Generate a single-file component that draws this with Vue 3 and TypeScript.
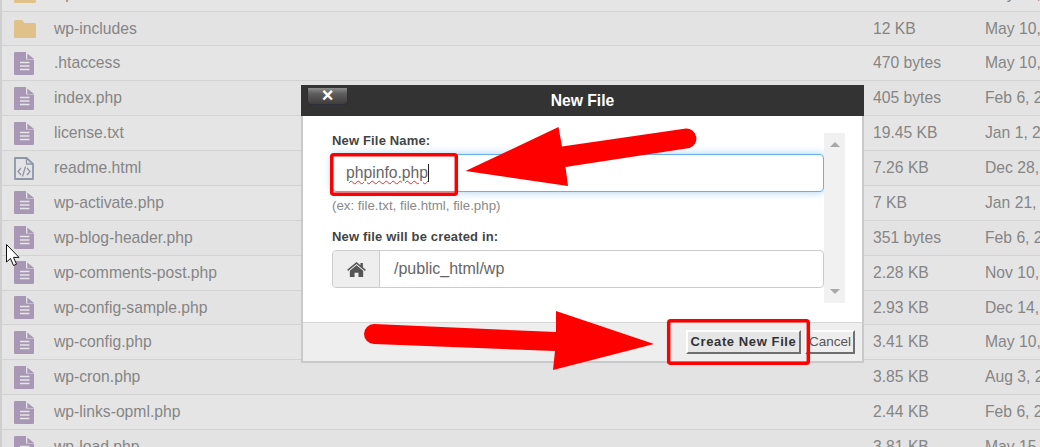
<script setup lang="ts">
interface FileRow {
  name: string
  size: string
  date: string
  kind: 'folder' | 'text' | 'code'
}

const rows: FileRow[] = [
  { name: 'wp-content', size: '4 KB', date: 'May 15, 2019', kind: 'folder' },
  { name: 'wp-includes', size: '12 KB', date: 'May 10, 2019', kind: 'folder' },
  { name: '.htaccess', size: '470 bytes', date: 'May 10, 2019', kind: 'text' },
  { name: 'index.php', size: '405 bytes', date: 'Feb 6, 2019', kind: 'text' },
  { name: 'license.txt', size: '19.45 KB', date: 'Jan 1, 2019', kind: 'text' },
  { name: 'readme.html', size: '7.26 KB', date: 'Dec 28, 2018', kind: 'code' },
  { name: 'wp-activate.php', size: '7 KB', date: 'Jan 21, 2019', kind: 'text' },
  { name: 'wp-blog-header.php', size: '351 bytes', date: 'Feb 6, 2019', kind: 'text' },
  { name: 'wp-comments-post.php', size: '2.28 KB', date: 'Nov 10, 2018', kind: 'text' },
  { name: 'wp-config-sample.php', size: '2.93 KB', date: 'Dec 14, 2018', kind: 'text' },
  { name: 'wp-config.php', size: '3.41 KB', date: 'May 10, 2019', kind: 'text' },
  { name: 'wp-cron.php', size: '3.85 KB', date: 'Aug 3, 2018', kind: 'text' },
  { name: 'wp-links-opml.php', size: '2.44 KB', date: 'Feb 6, 2019', kind: 'text' },
  { name: 'wp-load.php', size: '3.81 KB', date: 'May 15, 2019', kind: 'text' },
]
</script>

<template>
  <div class="page">
    <div class="list">
      <div v-for="row in rows" :key="row.name" class="row">
        <svg v-if="row.kind === 'folder'" class="icon" width="22" height="18" viewBox="0 0 22 18">
          <path d="M0 1.500A1.500 1.500 0 0 1 1.500 0h6a1.500 1.500 0 0 1 1.100.500L10.500 3h10A1.500 1.500 0 0 1 22 4.500v12a1.500 1.500 0 0 1-1.500 1.500h-19A1.500 1.500 0 0 1 0 16.500z" fill="#dfc189" />
        </svg>
        <svg v-else-if="row.kind === 'text'" class="icon" width="20" height="23" viewBox="0 0 20 23">
          <path d="M0 1.200A1.200 1.200 0 0 1 1.200 0H12v7.500h8v14.300a1.200 1.200 0 0 1-1.200 1.200H1.200A1.200 1.200 0 0 1 0 21.800z" fill="#a897b5" />
          <path d="M13.300 1.500L20 7h-6.700z" fill="#a897b5" />
          <path d="M6 10.500h9.500M6 14h9.500M6 17.500h9.500" stroke="#e6e6e6" stroke-width="1.300" />
        </svg>
        <svg v-else class="icon" width="20" height="23" viewBox="0 0 20 23">
          <path d="M1 1h11.500L19 7v15H1z" fill="none" stroke="#8f96a8" stroke-width="1.800" stroke-linejoin="round" />
          <path d="M12.500 1v6H19" fill="none" stroke="#8f96a8" stroke-width="1.300" />
          <path d="M7 11L4 14.500l3 3.500M13 11l3 3.500-3 3.500M11.500 9.500L8.500 19.500" fill="none" stroke="#8f96a8" stroke-width="1.300" />
        </svg>
        <span class="name">{{ row.name }}</span>
        <span class="size">{{ row.size }}</span>
        <span class="date">{{ row.date }}</span>
      </div>
    </div>

    <section class="dialog">
      <header class="dialog-head">
        <button class="close" type="button">×</button>
        <h2>New File</h2>
      </header>
      <div class="dialog-body">
        <div class="form">
          <label class="label">New File Name:</label>
          <div class="input focused">
            <span class="typed">phpinfo.php</span><span class="caret"></span>
          </div>
          <p class="hint">(ex: file.txt, file.html, file.php)</p>
          <label class="label second">New file will be created in:</label>
          <div class="input-group">
            <span class="addon">
              <svg width="19" height="15" viewBox="0 0 20 16">
                <path d="M10 0L0 8.300l1 1.200L10 2.100l9 7.400 1-1.200-3.200-2.700V1h-2.600v2.400z" fill="#555" />
                <path d="M10 3.500L2.900 9.400V16h5v-4.500h4.200V16h5V9.400z" fill="#555" />
              </svg>
            </span>
            <span class="path">/public_html/wp</span>
          </div>
        </div>
        <div class="scrollbar">
          <i class="up"></i>
          <i class="down"></i>
        </div>
      </div>
      <footer class="dialog-foot">
        <button class="btn primary" type="button">Create New File</button>
        <button class="btn cancel" type="button">Cancel</button>
      </footer>
    </section>

    <svg class="marks" width="1040" height="447" viewBox="0 0 1040 447">
      <path d="M465.500 171L558.500 127L562 146.500L686 128.500A10 10 0 0 1 689.500 148L565.500 167L568 186Z" fill="#f00" />
      <path d="M374 324L556 332L556 311L654 344L553 370L555 351L374 344A10 10 0 0 1 374 324Z" fill="#f00" />
      <rect x="331.700" y="154.700" width="124.600" height="39.600" rx="2" fill="none" stroke="#f00" stroke-width="3.500" />
      <rect x="668.700" y="320.700" width="139.600" height="42.600" rx="2" fill="none" stroke="#f00" stroke-width="3.500" />
      <path d="M6.500 244.500V262l4-3.500 3 7 3-1.300-3-6.800h5.500z" fill="#fff" stroke="#111" stroke-width="1" />
    </svg>
  </div>
</template>

<style>
html,
body {
  margin: 0;
  background: #e4e4e4;
}
</style>

<style scoped>
.page {
  position: relative;
  width: 1040px;
  height: 447px;
  overflow: hidden;
  background: #e4e4e4;
  font-family: "Liberation Sans", Arial, sans-serif;
}

.list {
  margin-top: -23.325px;
  border-left: 2px solid #cfcfcf;
}

.row {
  display: grid;
  grid-template-columns: 40px 819px 112px 200px;
  align-items: center;
  box-sizing: border-box;
  height: 34.875px;
  padding-left: 12px;
  border-bottom: 1px solid #d2d2d2;
  font-size: 15.7px;
  color: #858585;
  white-space: nowrap;
}

.row:nth-child(even) {
  background: #e3e3e3;
}

.row:nth-child(odd) {
  background: #e5e5e5;
}

.icon {
  display: block;
}

.dialog {
  position: absolute;
  left: 301px;
  top: 85px;
  width: 563px;
  height: 278px;
  box-sizing: border-box;
  display: flex;
  flex-direction: column;
  border: 2px solid #c9c9c9;
  border-top: 0;
  background: #fff;
}

.dialog-head {
  position: relative;
  flex: none;
  height: 31px;
  margin: 0 -2px;
  background: #333;
  display: flex;
  align-items: center;
  justify-content: center;
}

.dialog-head h2 {
  margin: 0;
  font-size: 15.7px;
  font-weight: 700;
  color: #fff;
}

.close {
  position: absolute;
  left: 6px;
  top: 3px;
  width: 41px;
  height: 17px;
  padding: 0 0 2px;
  border: 1px solid #2c3036;
  border-top: 0;
  border-radius: 0 0 4px 4px;
  background: linear-gradient(#8c8c8c 0, #5e5e5e 35%, #403d3c 100%);
  color: #fff;
  font-family: inherit;
  font-size: 20px;
  font-weight: 700;
  line-height: 14px;
}

.dialog-body {
  flex: 1;
  display: flex;
  align-items: flex-start;
  padding: 17px 17px 0 29px;
}

.form {
  width: 492px;
  flex: none;
}

.label {
  display: block;
  font-size: 13px;
  font-weight: 700;
  line-height: 15px;
  letter-spacing: 0.16px;
  color: #444;
}

.input {
  box-sizing: border-box;
  height: 38px;
  margin-top: 6px;
  padding: 0 13px;
  display: flex;
  align-items: center;
  border: 1px solid #66afe9;
  border-radius: 4px;
  box-shadow: 0 0 8px rgba(102, 175, 233, 0.6);
  font-size: 15.7px;
  color: #666;
}

.typed {
  text-decoration: underline wavy #e03030 1px;
  text-underline-offset: 2px;
}

.caret {
  width: 1px;
  height: 18px;
  background: #222;
}

.hint {
  margin: 6px 0 0;
  font-size: 13.3px;
  line-height: 15px;
  color: #8a8a8a;
}

.second {
  margin-top: 16px;
}

.input-group {
  box-sizing: border-box;
  height: 38px;
  margin-top: 6px;
  display: flex;
  align-items: stretch;
  border: 1px solid #ccc;
  border-radius: 4px;
  font-size: 16px;
  color: #666;
}

.addon {
  flex: none;
  width: 46px;
  display: flex;
  align-items: center;
  justify-content: center;
  background: #eee;
  border-right: 1px solid #ccc;
  border-radius: 4px 0 0 4px;
}

.path {
  padding-left: 14px;
  align-self: center;
}

.scrollbar {
  position: relative;
  flex: none;
  width: 21px;
  height: 170px;
  background: #f1f1f1;
}

.up,
.down {
  position: absolute;
  left: 6px;
  width: 0;
  height: 0;
  border-left: 5px solid transparent;
  border-right: 5px solid transparent;
}

.up {
  top: 9px;
  border-bottom: 5px solid #a8a8a8;
}

.down {
  bottom: 9px;
  border-top: 5px solid #a8a8a8;
}

.dialog-foot {
  flex: none;
  box-sizing: border-box;
  height: 39px;
  padding: 0 7px 1px 0;
  display: flex;
  align-items: center;
  justify-content: flex-end;
  gap: 4px;
  border-top: 1px solid #d6d6d6;
  background: #eee;
}

.btn {
  box-sizing: border-box;
  height: 24px;
  padding: 0;
  border: 2px solid;
  border-color: #fff #6f6f6f #6f6f6f #fff;
  background: #e6e6e6;
  color: #333;
  font-family: inherit;
  font-size: 13px;
}

.primary {
  width: 115px;
  font-weight: 700;
  letter-spacing: 0.6px;
}

.cancel {
  width: 50px;
  font-size: 13.5px;
  color: #555;
  background: #eee;
}

.marks {
  position: absolute;
  inset: 0;
  pointer-events: none;
}
</style>
